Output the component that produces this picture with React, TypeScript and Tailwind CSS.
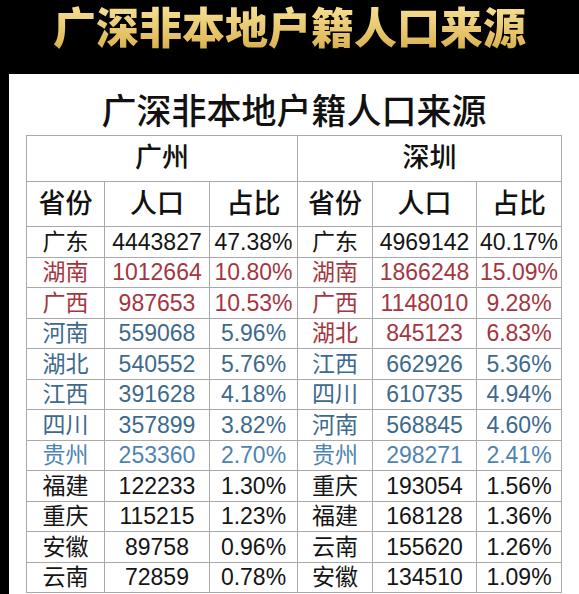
import React from 'react';

type Tone = 'black' | 'red' | 'blue' | 'sky';

interface Row {
  prov: string;
  pop: string;
  pct: string;
  tone: Tone;
}

const gz: Row[] = [
  { prov: '广东', pop: '4443827', pct: '47.38%', tone: 'black' },
  { prov: '湖南', pop: '1012664', pct: '10.80%', tone: 'red' },
  { prov: '广西', pop: '987653', pct: '10.53%', tone: 'red' },
  { prov: '河南', pop: '559068', pct: '5.96%', tone: 'blue' },
  { prov: '湖北', pop: '540552', pct: '5.76%', tone: 'blue' },
  { prov: '江西', pop: '391628', pct: '4.18%', tone: 'blue' },
  { prov: '四川', pop: '357899', pct: '3.82%', tone: 'blue' },
  { prov: '贵州', pop: '253360', pct: '2.70%', tone: 'sky' },
  { prov: '福建', pop: '122233', pct: '1.30%', tone: 'black' },
  { prov: '重庆', pop: '115215', pct: '1.23%', tone: 'black' },
  { prov: '安徽', pop: '89758', pct: '0.96%', tone: 'black' },
  { prov: '云南', pop: '72859', pct: '0.78%', tone: 'black' },
];

const sz: Row[] = [
  { prov: '广东', pop: '4969142', pct: '40.17%', tone: 'black' },
  { prov: '湖南', pop: '1866248', pct: '15.09%', tone: 'red' },
  { prov: '广西', pop: '1148010', pct: '9.28%', tone: 'red' },
  { prov: '湖北', pop: '845123', pct: '6.83%', tone: 'red' },
  { prov: '江西', pop: '662926', pct: '5.36%', tone: 'blue' },
  { prov: '四川', pop: '610735', pct: '4.94%', tone: 'blue' },
  { prov: '河南', pop: '568845', pct: '4.60%', tone: 'blue' },
  { prov: '贵州', pop: '298271', pct: '2.41%', tone: 'sky' },
  { prov: '重庆', pop: '193054', pct: '1.56%', tone: 'black' },
  { prov: '福建', pop: '168128', pct: '1.36%', tone: 'black' },
  { prov: '云南', pop: '155620', pct: '1.26%', tone: 'black' },
  { prov: '安徽', pop: '134510', pct: '1.09%', tone: 'black' },
];

const toneClass: Record<Tone, string> = {
  black: 'text-[#151515]',
  red: 'text-[#a4363f]',
  blue: 'text-[#3d6a8e]',
  sky: 'text-[#4f84b0]',
};

const cell = 'border border-[#a9a9a9] text-center p-0';

export default function App() {
  return (
    <div
      className="w-[579px] h-[594px] bg-black flex flex-col overflow-hidden"
      style={{ fontFamily: '"Liberation Sans", "Noto Sans CJK SC", sans-serif' }}
    >
      {/* 顶部金色标题 */}
      <div className="h-[74px] flex justify-center pt-[5px]">
        <span className="text-[43px] leading-[48px] font-black bg-gradient-to-b from-[#f6e096] via-[#e2bd5e] to-[#b0842e] bg-clip-text text-transparent">
          广深非本地户籍人口来源
        </span>
      </div>

      <div className="ml-[9px] flex-1 bg-white flex flex-col">
        <div className="h-[61px] pt-[15px] flex items-center justify-center">
          <span className="text-[35px] leading-[40px] font-medium text-[#111]">广深非本地户籍人口来源</span>
        </div>

        <table className="mx-auto w-[535px] table-fixed border-collapse">
          <colgroup>
            <col className="w-[78px]" />
            <col className="w-[105px]" />
            <col className="w-[88px]" />
            <col className="w-[75px]" />
            <col className="w-[104px]" />
            <col className="w-[85px]" />
          </colgroup>
          <tbody>
            <tr className="h-[46px]">
              <td colSpan={3} className={`${cell} text-[27px] font-medium text-[#111]`}>广州</td>
              <td colSpan={3} className={`${cell} text-[27px] font-medium text-[#111]`}>深圳</td>
            </tr>
            <tr className="h-[45px]">
              {['省份', '人口', '占比', '省份', '人口', '占比'].map((h, i) => (
                <td key={i} className={`${cell} text-[27px] font-medium text-[#111]`}>{h}</td>
              ))}
            </tr>
            {gz.map((g, i) => {
              const s = sz[i];
              return (
                <tr key={i} className="h-[30.5px] text-[23px] leading-[28px]">
                  <td className={`${cell} ${toneClass[g.tone]}`}>{g.prov}</td>
                  <td className={`${cell} ${toneClass[g.tone]}`}>{g.pop}</td>
                  <td className={`${cell} ${toneClass[g.tone]}`}>{g.pct}</td>
                  <td className={`${cell} ${toneClass[s.tone]}`}>{s.prov}</td>
                  <td className={`${cell} ${toneClass[s.tone]}`}>{s.pop}</td>
                  <td className={`${cell} ${toneClass[s.tone]}`}>{s.pct}</td>
                </tr>
              );
            })}
          </tbody>
        </table>
      </div>
    </div>
  );
}
